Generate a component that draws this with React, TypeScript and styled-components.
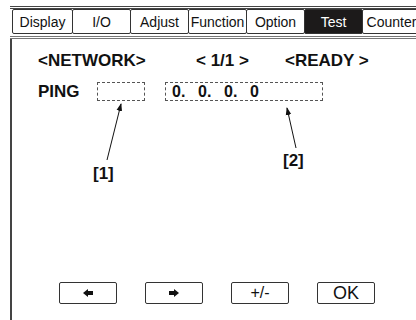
import React from "react";
import styled, { createGlobalStyle } from "styled-components";

const GlobalStyle = createGlobalStyle`
  html, body {
    margin: 0;
    padding: 0;
    background: #ffffff;
    overflow: hidden;
  }
  body {
    font-family: "Liberation Sans", Arial, sans-serif;
    color: #111111;
  }
`;

const Screen = styled.div`
  width: 416px;
  height: 320px;
  padding: 6px 0 0 10px;
  box-sizing: border-box;
  overflow: hidden;
`;

const Frame = styled.div`
  display: flex;
  flex-direction: column;
  width: 420px;
  height: 313px;
  border-top: 3px double #444444;
`;

const TabBar = styled.div`
  display: flex;
  padding: 0 0 2px 2px;
  border-bottom: 3px double #777777;
`;

const Tab = styled.div<{ $active?: boolean; $first?: boolean }>`
  flex: none;
  width: ${(p) => (p.$first ? 61 : 59)}px;
  height: 25px;
  margin-left: ${(p) => (p.$first ? 0 : -1)}px;
  box-sizing: border-box;
  border: 1px solid #333333;
  border-radius: 2px;
  background: ${(p) => (p.$active ? "#1c1a1a" : "#ffffff")};
  color: ${(p) => (p.$active ? "#ffffff" : "#111111")};
  display: flex;
  align-items: center;
  justify-content: center;
  font-size: 14px;
  white-space: nowrap;
  overflow: hidden;
`;

const Body = styled.div`
  flex: 1;
  display: flex;
  flex-direction: column;
  border-left: 2px solid #444444;
  border-bottom: 2px solid #777777;
  padding: 12px 0 16px 26px;
`;

const HeadRow = styled.div`
  display: flex;
  height: 20px;
  align-items: center;
`;

const Head = styled.div<{ $w?: number }>`
  width: ${(p) => (p.$w ? `${p.$w}px` : "auto")};
  font-size: 17px;
  font-weight: bold;
  white-space: pre;
`;

const PingRow = styled.div`
  display: flex;
  align-items: center;
  margin-top: 11px;
  height: 19px;
`;

const PingLabel = styled.div`
  width: 59px;
  font-size: 17px;
  font-weight: bold;
`;

const Field = styled.div<{ $w: number; $gap?: number }>`
  width: ${(p) => p.$w}px;
  height: 19px;
  margin-right: ${(p) => p.$gap ?? 0}px;
  box-sizing: border-box;
  border: 1px dashed #555555;
  display: flex;
  align-items: center;
  padding-left: 6px;
`;

const Octet = styled.span`
  width: 26px;
  font-size: 16px;
  font-weight: bold;
`;

const Callouts = styled.div`
  position: relative;
  height: 84px;
  margin-left: -26px;
`;

const ArrowLayer = styled.svg`
  position: absolute;
  left: 0;
  top: 0;
  overflow: visible;
`;

const CalloutLabel = styled.div<{ $x: number; $y: number }>`
  position: absolute;
  left: ${(p) => p.$x}px;
  top: ${(p) => p.$y}px;
  font-size: 17px;
  font-weight: bold;
  line-height: 18px;
`;

const ButtonRow = styled.div`
  margin-top: auto;
  display: flex;
  gap: 28px;
  padding-left: 21px;
`;

const KeyButton = styled.div<{ $big?: boolean }>`
  width: 58px;
  height: 22px;
  box-sizing: border-box;
  border: 1px solid #333333;
  border-radius: 2px;
  display: flex;
  align-items: center;
  justify-content: center;
  font-size: ${(p) => (p.$big ? 18 : 16)}px;
  line-height: 1;
`;

const tabs = ["Display", "I/O", "Adjust", "Function", "Option", "Test", "Counter"];

const LeftArrow = () => (
  <svg width="10" height="8" viewBox="0 0 10 8">
    <path d="M0 4 L5 0 L5 2 L10 2 L10 6 L5 6 L5 8 Z" fill="#111" />
  </svg>
);

const RightArrow = () => (
  <svg width="10" height="8" viewBox="0 0 10 8">
    <path d="M10 4 L5 0 L5 2 L0 2 L0 6 L5 6 L5 8 Z" fill="#111" />
  </svg>
);

const App: React.FC = () => {
  return (
    <Screen>
      <GlobalStyle />
      <Frame>
        <TabBar>
          {tabs.map((t, i) => (
            <Tab key={t} $first={i === 0} $active={t === "Test"}>
              {t}
            </Tab>
          ))}
        </TabBar>
        <Body>
          <HeadRow>
            <Head $w={158}>{"<NETWORK>"}</Head>
            <Head $w={89}>{"< 1/1 >"}</Head>
            <Head>{"<READY >"}</Head>
          </HeadRow>
          <PingRow>
            <PingLabel>PING</PingLabel>
            <Field $w={48} $gap={20} />
            <Field $w={158}>
              <Octet>0.</Octet>
              <Octet>0.</Octet>
              <Octet>0.</Octet>
              <Octet>0</Octet>
            </Field>
          </PingRow>
          <Callouts>
            <ArrowLayer width="320" height="84">
              <defs>
                <marker id="head" markerWidth="8" markerHeight="8" refX="7" refY="4" orient="auto" markerUnits="userSpaceOnUse">
                  <path d="M0 1.2 L8 4 L0 6.8 Z" fill="#111" />
                </marker>
              </defs>
              <line x1="95" y1="59" x2="109" y2="3" stroke="#111" strokeWidth="1" markerEnd="url(#head)" />
              <line x1="284" y1="47" x2="275" y2="7" stroke="#111" strokeWidth="1" markerEnd="url(#head)" />
            </ArrowLayer>
            <CalloutLabel $x={81} $y={64}>[1]</CalloutLabel>
            <CalloutLabel $x={271} $y={51}>[2]</CalloutLabel>
          </Callouts>
          <ButtonRow>
            <KeyButton>
              <LeftArrow />
            </KeyButton>
            <KeyButton>
              <RightArrow />
            </KeyButton>
            <KeyButton>+/-</KeyButton>
            <KeyButton $big>OK</KeyButton>
          </ButtonRow>
        </Body>
      </Frame>
    </Screen>
  );
};

export default App;
